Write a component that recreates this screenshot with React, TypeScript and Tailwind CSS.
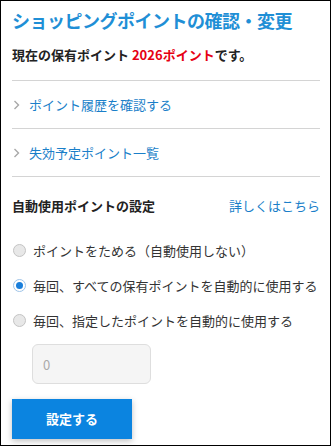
import { useState } from "react"

const options = [
    "ポイントをためる（自動使用しない）",
    "毎回、すべての保有ポイントを自動的に使用する",
    "毎回、指定したポイントを自動的に使用する",
]

const Chevron = () => (
    <svg width="7" height="10" viewBox="0 0 7 10" className="shrink-0">
        <polyline points="1.5,1 5.5,5 1.5,9" fill="none" stroke="#a8a8a8" strokeWidth="1.4" />
    </svg>
)

const App = () => {
    const [selected, setSelected] = useState(1)

    return (
        <div
            className="w-[331px] h-[446px] border border-black bg-white pl-[11px] pr-[10px] text-[#333]"
            style={{ fontFamily: '"Noto Sans CJK JP", "Noto Sans", sans-serif' }}
        >
            <div className="h-[80px] border-b border-[#d4d4d4] pt-[7px]">
                <h1 className="text-[18px] leading-[24px] font-bold text-[#1f8fd6] tracking-[-0.5px]">
                    ショッピングポイントの確認・変更
                </h1>
                <p className="mt-[13px] text-[13px] leading-[20px] font-bold text-[#222]">
                    現在の保有ポイント <span className="text-[#e60012]">2026ポイント</span>です。
                </p>
            </div>

            <div className="h-[48px] border-b border-[#d4d4d4] flex items-center gap-[9px] pl-[1px]">
                <Chevron />
                <span className="text-[13px] text-[#1a7fc9]">ポイント履歴を確認する</span>
            </div>
            <div className="h-[48px] border-b border-[#d4d4d4] flex items-center gap-[9px] pl-[1px]">
                <Chevron />
                <span className="text-[13px] text-[#1a7fc9]">失効予定ポイント一覧</span>
            </div>

            <div className="h-[56px] flex items-center justify-between pt-[2px]">
                <span className="text-[13px] font-bold text-[#222]">自動使用ポイントの設定</span>
                <span className="text-[13px] text-[#1a7fc9]">詳しくはこちら</span>
            </div>

            <div className="flex flex-col">
                {options.map((label, i) => (
                    <label
                        key={label}
                        className="h-[35px] flex items-center gap-[7px] pl-[1px] cursor-pointer"
                        onClick={() => setSelected(i)}
                    >
                        {selected === i ? (
                            <span className="w-[13px] h-[13px] rounded-full border border-[#9fc4e8] bg-white flex items-center justify-center shrink-0">
                                <span className="w-[7px] h-[7px] rounded-full bg-[#1a7fdb]" />
                            </span>
                        ) : (
                            <span className="w-[13px] h-[13px] rounded-full border border-[#c4c4c4] bg-[#e8e8e8] shrink-0" />
                        )}
                        <span className="text-[13px] text-[#333]">{label}</span>
                    </label>
                ))}
            </div>

            <div className="mt-[6px] pl-[20px]">
                <input
                    type="text"
                    placeholder="0"
                    className="w-[119px] h-[40px] rounded-[6px] border border-[#dedede] bg-[#f5f5f5] px-[10px] text-[13px] placeholder-[#aaa] outline-none"
                />
            </div>

            <button className="mt-[15px] w-[120px] h-[40px] bg-[#0b84e0] text-white text-[13px] font-bold shadow-[0_2px_6px_rgba(0,0,0,0.25)]">
                設定する
            </button>
        </div>
    )
}

export default App
